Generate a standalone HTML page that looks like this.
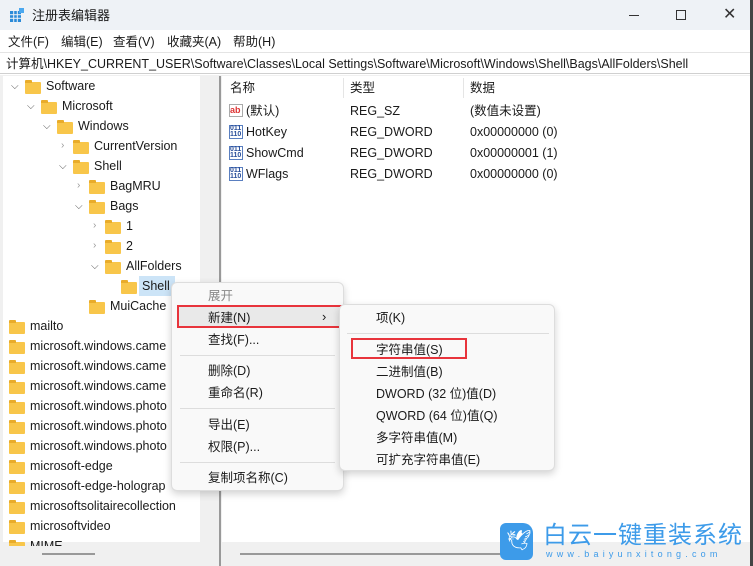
<!DOCTYPE html><html><head><meta charset="utf-8"><style>
*{margin:0;padding:0;box-sizing:border-box}
body{width:753px;height:566px;overflow:hidden;background:#fff;font-family:"Liberation Sans","Noto Sans CJK SC",sans-serif;font-size:12.5px;color:#1a1a1a;position:relative}
.abs{position:absolute;white-space:nowrap;line-height:16px}
.fold{position:absolute;width:16px;height:12px;background:#f8c64a;border-radius:1px}
.fold:before{content:"";position:absolute;left:0;top:-2px;width:7px;height:3px;background:#e9ac2a;border-radius:1px 1px 0 0}
.chev{position:absolute;font-size:10px;color:#555;line-height:12px}
.menu{position:absolute;background:#f9f9f9;border:1px solid #ddd;border-radius:6px;box-shadow:0 3px 8px rgba(0,0,0,.18)}
.sep{position:absolute;height:1px;background:#ddd}
.red{position:absolute;border:2px solid #e8343c}
.rows>div{height:20px;line-height:20px}
</style></head><body>
<div class="abs" style="left:0;top:0;width:753px;height:30px;background:#eef2f6"></div>
<svg class="abs" style="left:10px;top:8px" width="14" height="14"><rect x="0" y="3" width="11" height="11" fill="#2a8ad8"/><g stroke="#eef2f6" stroke-width="1"><line x1="3.7" y1="3" x2="3.7" y2="14"/><line x1="7.3" y1="3" x2="7.3" y2="14"/><line x1="0" y1="6.7" x2="11" y2="6.7"/><line x1="0" y1="10.3" x2="11" y2="10.3"/></g><rect x="9" y="0" width="5" height="5" fill="#4aa8ef"/></svg>
<div class="abs" style="left:32px;top:8px;font-size:13px">注册表编辑器</div>
<div class="abs" style="left:629px;top:15px;width:10px;height:1px;background:#333"></div>
<div class="abs" style="left:676px;top:10px;width:10px;height:10px;border:1px solid #333"></div>
<div class="abs" style="left:723px;top:7px;font-size:16px;color:#333">✕</div>
<div class="abs" style="left:8px;top:34px">文件(F)</div>
<div class="abs" style="left:61px;top:34px">编辑(E)</div>
<div class="abs" style="left:113px;top:34px">查看(V)</div>
<div class="abs" style="left:167px;top:34px">收藏夹(A)</div>
<div class="abs" style="left:233px;top:34px">帮助(H)</div>
<div class="abs" style="left:0;top:52px;width:753px;height:22px;border-top:1px solid #e4e4e4;border-bottom:1px solid #d0d0d0"></div>
<div class="abs" style="left:6px;top:56px">计算机\HKEY_CURRENT_USER\Software\Classes\Local Settings\Software\Microsoft\Windows\Shell\Bags\AllFolders\Shell</div>
<div class="abs" style="left:0;top:75px;width:753px;height:491px;background:#f0f0f0"></div>
<div class="abs" style="left:3px;top:76px;width:197px;height:466px;background:#fff"></div>
<div class="abs" style="left:222px;top:76px;width:528px;height:466px;background:#fff"></div>
<div class="abs" style="left:219px;top:76px;width:2px;height:490px;background:#999"></div>
<div class="abs" style="left:42px;top:553px;width:53px;height:2px;background:#999"></div>
<div class="abs" style="left:240px;top:553px;width:263px;height:2px;background:#999"></div>
<!-- tree -->
<span class="chev" style="left:11px;top:81px">⌵</span><div class="fold" style="left:25px;top:82px"></div><div class="abs" style="left:46px;top:78px">Software</div>
<span class="chev" style="left:27px;top:101px">⌵</span><div class="fold" style="left:41px;top:102px"></div><div class="abs" style="left:62px;top:98px">Microsoft</div>
<span class="chev" style="left:43px;top:121px">⌵</span><div class="fold" style="left:57px;top:122px"></div><div class="abs" style="left:78px;top:118px">Windows</div>
<span class="chev" style="left:61px;top:140px;color:#999">›</span><div class="fold" style="left:73px;top:142px"></div><div class="abs" style="left:94px;top:138px">CurrentVersion</div>
<span class="chev" style="left:59px;top:161px">⌵</span><div class="fold" style="left:73px;top:162px"></div><div class="abs" style="left:94px;top:158px">Shell</div>
<span class="chev" style="left:77px;top:180px;color:#999">›</span><div class="fold" style="left:89px;top:182px"></div><div class="abs" style="left:110px;top:178px">BagMRU</div>
<span class="chev" style="left:75px;top:201px">⌵</span><div class="fold" style="left:89px;top:202px"></div><div class="abs" style="left:110px;top:198px">Bags</div>
<span class="chev" style="left:93px;top:220px;color:#999">›</span><div class="fold" style="left:105px;top:222px"></div><div class="abs" style="left:126px;top:218px">1</div>
<span class="chev" style="left:93px;top:240px;color:#999">›</span><div class="fold" style="left:105px;top:242px"></div><div class="abs" style="left:126px;top:238px">2</div>
<span class="chev" style="left:91px;top:261px">⌵</span><div class="fold" style="left:105px;top:262px"></div><div class="abs" style="left:126px;top:258px">AllFolders</div>
<div class="abs" style="left:139px;top:276px;width:36px;height:20px;background:#cce4f7"></div>
<div class="fold" style="left:121px;top:282px"></div><div class="abs" style="left:142px;top:278px">Shell</div>
<div class="fold" style="left:89px;top:302px"></div><div class="abs" style="left:110px;top:298px">MuiCache</div>
<div class="rows" style="position:absolute;left:3px;top:316px">
<div style="padding-left:27px;position:relative"><div class="fold" style="left:6px;top:6px"></div>mailto</div>
<div style="padding-left:27px;position:relative"><div class="fold" style="left:6px;top:6px"></div>microsoft.windows.came</div>
<div style="padding-left:27px;position:relative"><div class="fold" style="left:6px;top:6px"></div>microsoft.windows.came</div>
<div style="padding-left:27px;position:relative"><div class="fold" style="left:6px;top:6px"></div>microsoft.windows.came</div>
<div style="padding-left:27px;position:relative"><div class="fold" style="left:6px;top:6px"></div>microsoft.windows.photo</div>
<div style="padding-left:27px;position:relative"><div class="fold" style="left:6px;top:6px"></div>microsoft.windows.photo</div>
<div style="padding-left:27px;position:relative"><div class="fold" style="left:6px;top:6px"></div>microsoft.windows.photo</div>
<div style="padding-left:27px;position:relative"><div class="fold" style="left:6px;top:6px"></div>microsoft-edge</div>
<div style="padding-left:27px;position:relative"><div class="fold" style="left:6px;top:6px"></div>microsoft-edge-holograp</div>
<div style="padding-left:27px;position:relative"><div class="fold" style="left:6px;top:6px"></div>microsoftsolitairecollection</div>
<div style="padding-left:27px;position:relative"><div class="fold" style="left:6px;top:6px"></div>microsoftvideo</div>
<div style="padding-left:27px;position:relative;height:10px;overflow:hidden"><div class="fold" style="left:6px;top:6px"></div>MIME</div>
</div>
<!-- list -->
<div class="abs" style="left:230px;top:80px">名称</div><div class="abs" style="left:343px;top:78px;width:1px;height:20px;background:#e5e5e5"></div>
<div class="abs" style="left:350px;top:80px">类型</div><div class="abs" style="left:463px;top:78px;width:1px;height:20px;background:#e5e5e5"></div>
<div class="abs" style="left:470px;top:80px">数据</div>
<div class="abs" style="left:229px;top:104px;width:14px;height:13px;border:1px solid #aaa;background:#fff;font-size:9px;color:#d33;font-weight:bold;line-height:11px">ab</div>
<div class="abs" style="left:246px;top:103px">(默认)</div><div class="abs" style="left:350px;top:103px">REG_SZ</div><div class="abs" style="left:470px;top:103px">(数值未设置)</div>
<div class="abs" style="left:229px;top:125px;width:14px;height:14px;border:1px solid #5a7fc0;font-size:7px;line-height:6px;color:#2a4f9a;font-weight:bold">011<br>110</div>
<div class="abs" style="left:246px;top:124px">HotKey</div><div class="abs" style="left:350px;top:124px">REG_DWORD</div><div class="abs" style="left:470px;top:124px">0x00000000 (0)</div>
<div class="abs" style="left:229px;top:146px;width:14px;height:14px;border:1px solid #5a7fc0;font-size:7px;line-height:6px;color:#2a4f9a;font-weight:bold">011<br>110</div>
<div class="abs" style="left:246px;top:145px">ShowCmd</div><div class="abs" style="left:350px;top:145px">REG_DWORD</div><div class="abs" style="left:470px;top:145px">0x00000001 (1)</div>
<div class="abs" style="left:229px;top:167px;width:14px;height:14px;border:1px solid #5a7fc0;font-size:7px;line-height:6px;color:#2a4f9a;font-weight:bold">011<br>110</div>
<div class="abs" style="left:246px;top:166px">WFlags</div><div class="abs" style="left:350px;top:166px">REG_DWORD</div><div class="abs" style="left:470px;top:166px">0x00000000 (0)</div>
<!-- context menu -->
<div class="menu" style="left:171px;top:282px;width:173px;height:209px"></div>
<div class="abs" style="left:208px;top:288px;color:#888">展开</div>
<div class="abs" style="left:178px;top:306px;width:161px;height:20px;background:#e9e9e9"></div>
<div class="red" style="left:177px;top:305px;width:165px;height:23px"></div>
<div class="abs" style="left:208px;top:310px">新建(N)</div><div class="abs" style="left:322px;top:309px;font-size:13px">›</div>
<div class="abs" style="left:208px;top:332px">查找(F)...</div>
<div class="sep" style="left:180px;top:355px;width:155px"></div>
<div class="abs" style="left:208px;top:363px">删除(D)</div>
<div class="abs" style="left:208px;top:385px">重命名(R)</div>
<div class="sep" style="left:180px;top:408px;width:155px"></div>
<div class="abs" style="left:208px;top:417px">导出(E)</div>
<div class="abs" style="left:208px;top:439px">权限(P)...</div>
<div class="sep" style="left:180px;top:462px;width:155px"></div>
<div class="abs" style="left:208px;top:470px">复制项名称(C)</div>
<div class="menu" style="left:339px;top:304px;width:216px;height:167px"></div>
<div class="abs" style="left:376px;top:310px">项(K)</div>
<div class="sep" style="left:347px;top:333px;width:202px"></div>
<div class="red" style="left:351px;top:338px;width:116px;height:21px"></div>
<div class="abs" style="left:376px;top:342px">字符串值(S)</div>
<div class="abs" style="left:376px;top:364px">二进制值(B)</div>
<div class="abs" style="left:376px;top:386px">DWORD (32 位)值(D)</div>
<div class="abs" style="left:376px;top:408px">QWORD (64 位)值(Q)</div>
<div class="abs" style="left:376px;top:430px">多字符串值(M)</div>
<div class="abs" style="left:376px;top:452px">可扩充字符串值(E)</div>
<!-- watermark -->
<div class="abs" style="left:500px;top:523px;width:33px;height:37px;background:#3d9be9;border-radius:6px 10px 6px 6px"></div>
<div class="abs" style="left:506px;top:530px;color:#fff;font-size:20px;line-height:22px">🕊</div>
<div class="abs" style="left:543px;top:522px;font-size:24px;line-height:28px;color:#3d9be9;letter-spacing:1px">白云一键重装系统</div>
<div class="abs" style="left:546px;top:548px;font-size:9px;line-height:12px;color:#3d9be9;letter-spacing:4.2px">www.baiyunxitong.com</div>
<div class="abs" style="left:750px;top:0;width:3px;height:566px;background:#444"></div>
</body></html>
